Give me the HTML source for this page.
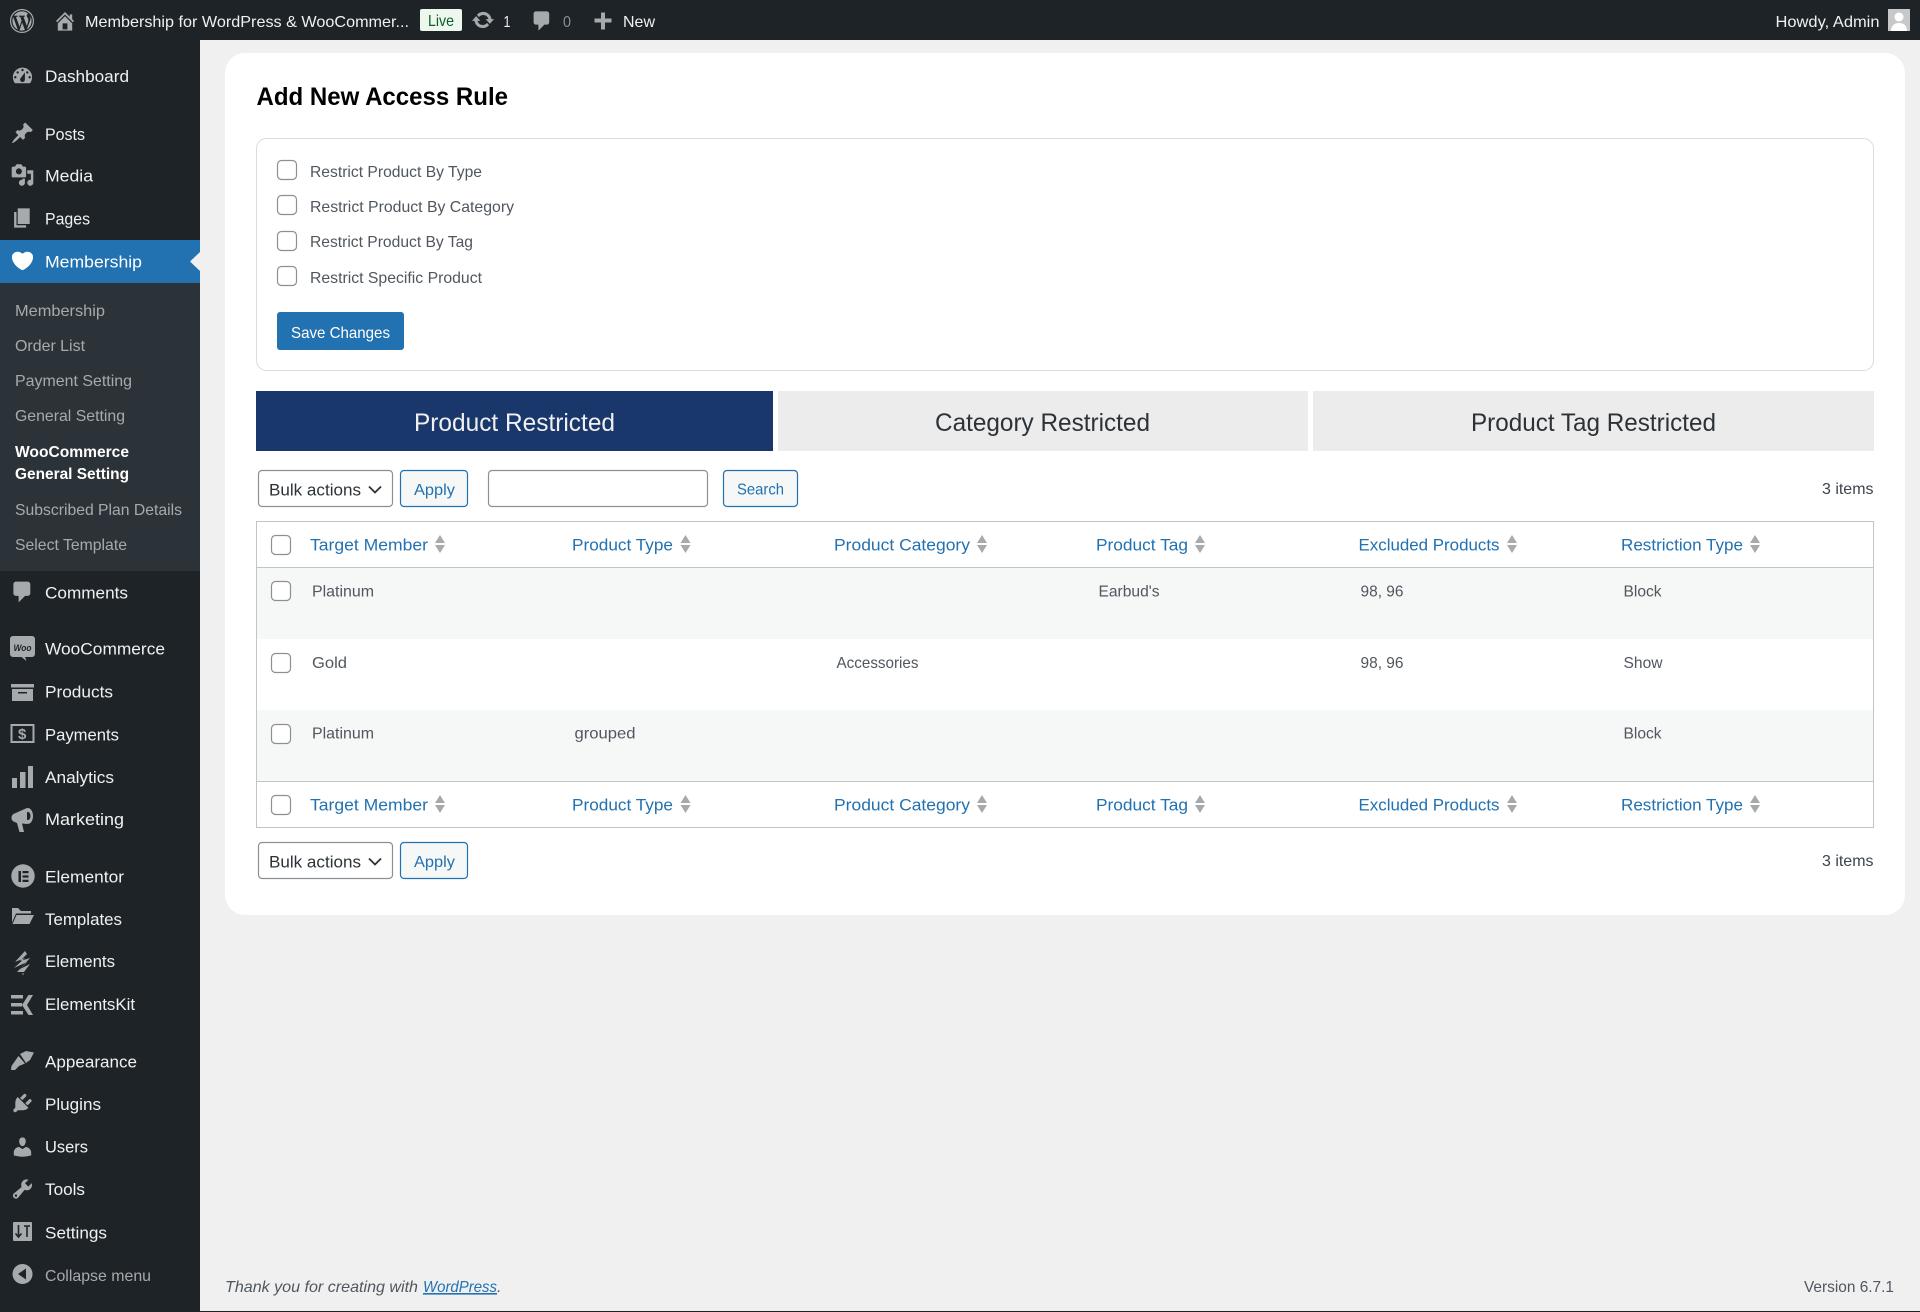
<!DOCTYPE html>
<html lang="en"><head><meta charset="utf-8"><title>Add New Access Rule</title>
<style>
html,body{margin:0;padding:0;background:#f0f0f1;width:1920px;height:1312px;overflow:hidden}
svg{display:block;position:absolute;left:0;top:0}
text{font-family:"Liberation Sans",sans-serif}
.t{font-size:16px;fill:#f0f0f1}
.m{font-size:17px;fill:#f0f0f1}
.s{font-size:16px;fill:#a7aaad}
.b{font-size:15.5px;fill:#fff;font-weight:bold}
.l{font-size:16px;fill:#50575e}
.h{font-size:17px;fill:#2271b1}
.tab{font-size:25px;fill:#2c3338}
.ic{fill:#a7aaad}
.cb{fill:#fff;stroke:#8c8f94;stroke-width:1.2}
.ar{fill:#a7aaad}
</style></head><body>
<svg width="1920" height="1312" viewBox="0 0 1920 1312" xmlns="http://www.w3.org/2000/svg">
<defs>
<g id="sort"><path d="M-5 8 L0 0 L5 8Z M-5 10 L5 10 L0 18Z" class="ar"/></g>
</defs>
<rect width="1920" height="1312" fill="#f0f0f1"/>
<rect x="0" y="0" width="1920" height="40" fill="#1d2327"/>
<rect x="0" y="40" width="200" height="1272" fill="#1d2327"/>
<rect x="0" y="283" width="200" height="288" fill="#2c3338"/>
<rect x="0" y="240" width="200" height="43" fill="#2271b1"/>
<path d="M200 252 L190 261.500 L200 271Z" fill="#f0f0f1"/>
<rect x="0" y="1311" width="1920" height="1" fill="#1d2327"/>

<!-- Admin bar -->
<g transform="translate(10,9) scale(1.2)" fill="#a7aaad"><path fill-rule="evenodd" d="M20 10c0-5.52-4.48-10-10-10S0 4.480 0 10s4.480 10 10 10 10-4.480 10-10zM10 1.010c4.970 0 8.990 4.020 8.990 8.990s-4.020 8.990-8.990 8.990S1.010 14.970 1.010 10 5.030 1.010 10 1.010zM8.010 14.820L4.960 6.610c.49-.03 1.050-.08 1.050-.08.43-.05.38-1.010-.06-.99 0 0-1.290.1-2.130.1-.15 0-.33 0-.52-.01 1.440-2.170 3.900-3.600 6.700-3.600 2.090 0 3.990.79 5.410 2.090-.6-.08-1.450.35-1.450 1.420 0 .66.38 1.220.79 1.880.31.54.5 1.220.5 2.210 0 1.340-1.270 4.480-1.270 4.480l-2.710-7.500c.48-.03.75-.16.75-.16.43-.05.38-1.100-.05-1.080 0 0-1.300.11-2.140.11-.78 0-2.110-.11-2.110-.11-.43-.02-.48 1.060-.05 1.080l.84.08 1.120 3.040zm6.020 2.150L16.640 10s.67-1.690.39-3.810c.63 1.140.94 2.420.94 3.810 0 2.960-1.560 5.580-3.940 6.970zM2.680 6.770L6.500 17.250c-2.670-1.300-4.470-4.080-4.470-7.250 0-1.160.2-2.230.65-3.230zm7.450 4.530l2.290 6.250c-.75.27-1.570.42-2.420.42-.72 0-1.410-.11-2.060-.3z"/></g>
<g transform="translate(53,9) scale(1.2)" fill="#a7aaad"><path fill-rule="evenodd" d="M16 8.500l1.530 1.530-1.060 1.060L10 4.620l-6.470 6.470-1.060-1.060L10 2.500l4 4v-2h2v4zm-6-2.460l6 5.990V18H4v-5.970zM12 17v-5H8v5h4z"/></g>
<text class="t" x="85" y="27" textLength="324" lengthAdjust="spacingAndGlyphs">Membership for WordPress &amp; WooCommer...</text>
<rect x="420" y="9" width="42" height="22" rx="2" fill="#edf7ee"/>
<text x="428" y="26" font-size="16" fill="#0a5c2a" textLength="26" lengthAdjust="spacingAndGlyphs">Live</text>
<g transform="translate(471,8) scale(1.2)" fill="#a7aaad"><path d="M10.200 3.280c3.530 0 6.430 2.610 6.920 6h2.080l-3.500 4-3.500-4h2.320c-.45-1.970-2.210-3.450-4.320-3.450-1.450 0-2.730.71-3.540 1.780L4.950 5.660C6.230 4.200 8.110 3.280 10.200 3.280zm-.4 13.440c-3.520 0-6.430-2.610-6.920-6H.8l3.500-4c1.170 1.330 2.330 2.670 3.500 4H5.480c.45 1.970 2.210 3.450 4.320 3.450 1.450 0 2.730-.71 3.540-1.780l1.710 1.950c-1.280 1.460-3.150 2.380-5.250 2.380z"/></g>
<text class="t" x="503.500" y="27" textLength="7" lengthAdjust="spacingAndGlyphs">1</text>
<g transform="translate(530,9) scale(1.2)" fill="#a7aaad"><path d="M5 2h9c1.100 0 2 .9 2 2v7c0 1.100-.9 2-2 2h-2l-5 5v-5H5c-1.100 0-2-.9-2-2V4c0-1.100.9-2 2-2z"/></g>
<text x="563" y="27" font-size="16" fill="#8c8f94" textLength="8" lengthAdjust="spacingAndGlyphs">0</text>
<rect x="594.500" y="18.500" width="17" height="4" fill="#a7aaad"/><rect x="601" y="12.500" width="4" height="17" fill="#a7aaad"/>
<text class="t" x="623" y="27" textLength="32" lengthAdjust="spacingAndGlyphs">New</text>
<text class="t" x="1775.500" y="27" textLength="104" lengthAdjust="spacingAndGlyphs">Howdy, Admin</text>
<rect x="1888" y="9" width="22" height="22" fill="#c8c8c8"/>
<circle cx="1899" cy="17" r="4.500" fill="#fff"/><path d="M1891 31c0-6 4-8 8-8s8 2 8 8z" fill="#fff"/>

<!-- Sidebar icons -->
<g transform="translate(10.500,64) scale(1.2)" class="ic"><path fill-rule="evenodd" d="M3.760 16h12.480c1.100-1.370 1.760-3.110 1.760-5 0-4.420-3.580-8-8-8s-8 3.580-8 8c0 1.890.66 3.630 1.760 5zM10 4c.55 0 1 .45 1 1s-.45 1-1 1-1-.45-1-1 .45-1 1-1zM6 6c.55 0 1 .45 1 1s-.45 1-1 1-1-.45-1-1 .45-1 1-1zm8 0c.55 0 1 .45 1 1s-.45 1-1 1-1-.45-1-1 .45-1 1-1zm-5.370 5.550L12 7v6c0 1.100-.9 2-2 2s-2-.9-2-2c0-.57.24-1.080.63-1.450zM4 10c.55 0 1 .45 1 1s-.45 1-1 1-1-.45-1-1 .45-1 1-1zm12 0c.55 0 1 .45 1 1s-.45 1-1 1-1-.45-1-1 .45-1 1-1z"/></g>
<g transform="translate(10.500,121) scale(1.2)" class="ic"><path d="M10.440 3.020l1.820-1.820 6.360 6.350-1.830 1.820c-1.050-.68-2.480-.57-3.410.36l-.75.75c-.92.93-1.040 2.350-.35 3.410l-1.830 1.820-2.410-2.410-2.800 2.790c-.42.42-3.380 2.710-3.800 2.290s1.860-3.390 2.280-3.810l2.790-2.790L4.100 9.360l1.830-1.820c1.050.69 2.480.57 3.400-.36l.75-.75c.93-.92 1.050-2.350.36-3.410z"/></g>
<g transform="translate(10.500,163) scale(1.2)" class="ic"><path fill-rule="evenodd" d="M13 11V4c0-.55-.45-1-1-1h-1.670L9 1H5L3.670 3H2c-.55 0-1 .45-1 1v7c0 .55.45 1 1 1h10c.55 0 1-.45 1-1zM7 4.500c1.380 0 2.500 1.120 2.500 2.500S8.380 9.500 7 9.500 4.500 8.380 4.500 7 5.620 4.500 7 4.500zM14 6h5v10.500c0 1.380-1.120 2.500-2.500 2.500S14 17.880 14 16.500s1.120-2.500 2.500-2.500c.17 0 .34.02.5.05V9h-3V6zm-4 8.050V13h2v3.500c0 1.380-1.120 2.500-2.500 2.500S7 17.880 7 16.500 8.120 14 9.500 14c.17 0 .34.02.5.05z"/></g>
<g transform="translate(10.500,206) scale(1.2)" class="ic"><path d="M6 15V2h10v13H6zm-1 1h8v2H3V5h2v11z"/></g>
<g transform="translate(9.500,248) scale(1.3)" fill="#fff"><path d="M10 17.120c3.330-1.400 5.740-3.790 7.040-6.210 1.280-2.410 1.460-4.810.32-6.250-1.030-1.290-2.370-1.780-3.730-1.740s-2.680.63-3.630 1.540c-.95-.91-2.270-1.500-3.630-1.540s-2.700.45-3.730 1.740c-1.140 1.440-.96 3.840.34 6.250 1.280 2.420 3.690 4.810 7.020 6.210z"/></g>
<g transform="translate(9.500,579) scale(1.3)" class="ic"><path d="M5 2h9c1.100 0 2 .9 2 2v7c0 1.100-.9 2-2 2h-2l-5 5v-5H5c-1.100 0-2-.9-2-2V4c0-1.100.9-2 2-2z"/></g>
<path class="ic" d="M13 636h19a3 3 0 0 1 3 3v15a3 3 0 0 1-3 3h-7l1.500 4-5-4H13a3 3 0 0 1-3-3v-15a3 3 0 0 1 3-3z"/>
<text x="13.500" y="651" font-size="9" font-style="italic" font-weight="bold" fill="#1d2327" textLength="18" lengthAdjust="spacingAndGlyphs">Woo</text>
<rect x="11" y="684" width="23" height="3.500" class="ic"/><path class="ic" fill-rule="evenodd" d="M12 689h21v12H12zM18 692h9v1.500h-9z"/>
<rect x="11.500" y="725" width="22" height="17" fill="none" stroke="#a7aaad" stroke-width="2"/>
<text x="18" y="739" font-size="15" font-weight="bold" fill="#a7aaad">$</text>
<rect x="12" y="778" width="5" height="10" class="ic"/><rect x="20" y="772" width="5.500" height="16" class="ic"/><rect x="28" y="766" width="5" height="22" class="ic"/>
<path class="ic" fill-rule="evenodd" d="M27 808 L14.500 813.500 a4.500 4.500 0 0 0 -1 8 L17 823 L19.500 832 H24 L22 823.500 L27 824 Z"/>
<path class="ic" fill-rule="evenodd" d="M28 808 a5 8 0 1 0 .01 0z M28 812 a2.500 4 0 1 1 -.01 0z"/>
<path class="ic" fill-rule="evenodd" d="M23 864.300 a11.700 11.700 0 1 0 .01 0z M18.500 871h2.500v11h-2.500z M22.500 871h6v2.200h-6z M22.500 875.400h6v2.200h-6z M22.500 879.800h6v2.200h-6z"/>
<path class="ic" d="M12 908h6l3 3h10v2.500H16l-4 9z M16.500 915H34l-4.500 9H12.500z"/>
<path class="ic" d="M25 951 L15 962 L25 958 L14 968 L27 962 L17 972 L24 972 L30 964 L20 969 L30 958 L20 961 L27 954z"/>
<circle cx="23" cy="974" r="0.800" class="ic"/>
<path class="ic" d="M11 995h12v3.500H11z M11 1003h11v3.500H11z M11 1011h12v3.500H11z M33 995 L27 1005 L33 1015 H28.500 L22 1005 L28.500 995z"/>
<path class="ic" d="M20 1054 L26 1051 L34 1052.500 L30 1060 L26 1063Z M18.500 1056 L25 1063.500 L19 1066 L15 1070 H11 L11.500 1066 L15 1061 Z"/>
<g transform="translate(10.500,1091) scale(1.2)" class="ic"><path d="M13.110 4.360L9.870 7.600 8 5.730l3.240-3.240c.35-.34 1.050-.2 1.560.32.52.51.66 1.210.31 1.550zm-8 1.770l.91-1.120 9.010 9.010-1.190.84c-.71.71-2.630 1.160-3.820 1.160H6.140L4.900 17.260c-.59.59-1.540.59-2.120 0-.59-.58-.59-1.530 0-2.120l1.240-1.240v-3.880c0-1.130.4-3.190 1.090-3.890zm7.260 3.970l3.240-3.240c.34-.35 1.040-.21 1.550.31.52.51.66 1.210.31 1.550l-3.240 3.250z"/></g>
<g transform="translate(10.500,1135) scale(1.2)" class="ic"><path d="M10 9.250c-2.270 0-2.730-3.440-2.730-3.440C7 4.020 7.820 2 9.970 2c2.160 0 2.980 2.020 2.710 3.810 0 0-.41 3.440-2.680 3.440zm0 2.570L12.720 10c2.390 0 4.520 2.330 4.520 4.530v2.490s-3.650 1.130-7.240 1.130c-3.650 0-7.240-1.130-7.240-1.130v-2.490c0-2.250 1.940-4.480 4.470-4.480z"/></g>
<g transform="translate(10.500,1177) scale(1.2)" class="ic"><path fill-rule="evenodd" d="M16.680 9.770c-1.340 1.340-3.300 1.670-4.950.99l-5.410 6.520c-.99.99-2.590.99-3.580 0s-.99-2.590 0-3.570l6.520-5.420c-.68-1.650-.35-3.610.99-4.950 1.280-1.280 3.120-1.620 4.720-1.060l-2.890 2.890 2.820 2.820 2.860-2.870c.53 1.580.18 3.390-1.080 4.650zM3.810 16.210c.4.39 1.040.39 1.430 0 .4-.4.4-1.040 0-1.430-.39-.4-1.030-.4-1.430 0-.39.39-.39 1.030 0 1.430z"/></g>
<rect x="13" y="1222" width="19" height="19" rx="1" class="ic"/>
<path d="M18.500 1225v11 M15.500 1233.500l3 3.500 3-3.500 M24 1226h6 M27 1226v11" stroke="#1d2327" stroke-width="1.600" fill="none"/>
<path class="ic" fill-rule="evenodd" d="M22.500 1264 a10 10 0 1 0 .01 0z M26 1268.500v11l-8-5.500z"/>

<!-- Sidebar text -->
<text class="m" x="45" y="82" textLength="84" lengthAdjust="spacingAndGlyphs">Dashboard</text>
<text class="m" x="45" y="140" textLength="40" lengthAdjust="spacingAndGlyphs">Posts</text>
<text class="m" x="45" y="181.500" textLength="48" lengthAdjust="spacingAndGlyphs">Media</text>
<text class="m" x="45" y="224.500" textLength="45" lengthAdjust="spacingAndGlyphs">Pages</text>
<text class="m" x="45" y="267.500" style="fill:#fff" textLength="97" lengthAdjust="spacingAndGlyphs">Membership</text>
<text class="s" x="15" y="316" textLength="90" lengthAdjust="spacingAndGlyphs">Membership</text>
<text class="s" x="15" y="351" textLength="70" lengthAdjust="spacingAndGlyphs">Order List</text>
<text class="s" x="15" y="386" textLength="117" lengthAdjust="spacingAndGlyphs">Payment Setting</text>
<text class="s" x="15" y="421" textLength="110" lengthAdjust="spacingAndGlyphs">General Setting</text>
<text class="b" x="15" y="457" textLength="114" lengthAdjust="spacingAndGlyphs">WooCommerce</text>
<text class="b" x="15" y="479" textLength="114" lengthAdjust="spacingAndGlyphs">General Setting</text>
<text class="s" x="15" y="515" textLength="167" lengthAdjust="spacingAndGlyphs">Subscribed Plan Details</text>
<text class="s" x="15" y="550" textLength="112" lengthAdjust="spacingAndGlyphs">Select Template</text>
<text class="m" x="45" y="598.500" textLength="83" lengthAdjust="spacingAndGlyphs">Comments</text>
<text class="m" x="45" y="654.500" textLength="120" lengthAdjust="spacingAndGlyphs">WooCommerce</text>
<text class="m" x="45" y="697.500" textLength="68" lengthAdjust="spacingAndGlyphs">Products</text>
<text class="m" x="45" y="740.500" textLength="74" lengthAdjust="spacingAndGlyphs">Payments</text>
<text class="m" x="45" y="783" textLength="69" lengthAdjust="spacingAndGlyphs">Analytics</text>
<text class="m" x="45" y="825" textLength="79" lengthAdjust="spacingAndGlyphs">Marketing</text>
<text class="m" x="45" y="882.500" textLength="79" lengthAdjust="spacingAndGlyphs">Elementor</text>
<text class="m" x="45" y="925" textLength="77" lengthAdjust="spacingAndGlyphs">Templates</text>
<text class="m" x="45" y="967" textLength="70" lengthAdjust="spacingAndGlyphs">Elements</text>
<text class="m" x="45" y="1010" textLength="90" lengthAdjust="spacingAndGlyphs">ElementsKit</text>
<text class="m" x="45" y="1067.500" textLength="92" lengthAdjust="spacingAndGlyphs">Appearance</text>
<text class="m" x="45" y="1110" textLength="56" lengthAdjust="spacingAndGlyphs">Plugins</text>
<text class="m" x="45" y="1152.500" textLength="43" lengthAdjust="spacingAndGlyphs">Users</text>
<text class="m" x="45" y="1195" textLength="40" lengthAdjust="spacingAndGlyphs">Tools</text>
<text class="m" x="45" y="1238.500" textLength="62" lengthAdjust="spacingAndGlyphs">Settings</text>
<text x="45" y="1281" font-size="16" fill="#a7aaad" textLength="106" lengthAdjust="spacingAndGlyphs">Collapse menu</text>

<!-- Card -->
<rect x="225" y="53" width="1680" height="862" rx="20" fill="#fff"/>
<text x="256.500" y="105" font-size="25" font-weight="bold" fill="#000" textLength="251.500" lengthAdjust="spacingAndGlyphs">Add New Access Rule</text>
<rect x="256.500" y="138.500" width="1617" height="232" rx="10" fill="#fff" stroke="#dcdcde"/>
<rect class="cb" x="277.500" y="160.500" width="19" height="19" rx="4"/>
<rect class="cb" x="277.500" y="195.500" width="19" height="19" rx="4"/>
<rect class="cb" x="277.500" y="231.500" width="19" height="19" rx="4"/>
<rect class="cb" x="277.500" y="266.500" width="19" height="19" rx="4"/>
<text class="l" x="310" y="177" textLength="172" lengthAdjust="spacingAndGlyphs">Restrict Product By Type</text>
<text class="l" x="310" y="212" textLength="204" lengthAdjust="spacingAndGlyphs">Restrict Product By Category</text>
<text class="l" x="310" y="247" textLength="163" lengthAdjust="spacingAndGlyphs">Restrict Product By Tag</text>
<text class="l" x="310" y="283" textLength="172" lengthAdjust="spacingAndGlyphs">Restrict Specific Product</text>
<rect x="277" y="312" width="127" height="38" rx="3" fill="#2271b1"/>
<text x="291" y="338" font-size="16" fill="#fff" textLength="99" lengthAdjust="spacingAndGlyphs">Save Changes</text>

<!-- Tabs -->
<rect x="256" y="391" width="517" height="60" fill="#1a376c"/>
<rect x="778" y="391" width="530" height="60" fill="#ececec"/>
<rect x="1313" y="391" width="561" height="60" fill="#ececec"/>
<text class="tab" style="fill:#f0f0f1" x="414" y="431" textLength="201" lengthAdjust="spacingAndGlyphs">Product Restricted</text>
<text class="tab" x="935" y="431" textLength="215" lengthAdjust="spacingAndGlyphs">Category Restricted</text>
<text class="tab" x="1471" y="431" textLength="245" lengthAdjust="spacingAndGlyphs">Product Tag Restricted</text>

<!-- Top toolbar -->
<rect x="258.500" y="470.500" width="134" height="36" rx="3.500" fill="#fff" stroke="#8c8f94" stroke-width="1.200"/>
<text x="269" y="495.500" font-size="17" fill="#2c3338" textLength="92" lengthAdjust="spacingAndGlyphs">Bulk actions</text>
<path d="M369 486.500l6 6 6-6" fill="none" stroke="#2c3338" stroke-width="1.800"/>
<rect x="400.500" y="470.500" width="67" height="36" rx="3.500" fill="#f6f7f7" stroke="#2271b1" stroke-width="1.200"/>
<text x="414" y="495" font-size="16" fill="#2271b1" textLength="41" lengthAdjust="spacingAndGlyphs">Apply</text>
<rect x="488.500" y="470.500" width="219" height="36" rx="3.500" fill="#fff" stroke="#8c8f94" stroke-width="1.200"/>
<rect x="723.500" y="470.500" width="74" height="36" rx="3.500" fill="#f6f7f7" stroke="#2271b1" stroke-width="1.200"/>
<text x="737" y="494.500" font-size="16" fill="#2271b1" textLength="47" lengthAdjust="spacingAndGlyphs">Search</text>
<text x="1822" y="494" font-size="16" fill="#3c434a" textLength="51.500" lengthAdjust="spacingAndGlyphs">3 items</text>

<!-- Table -->
<rect x="256.500" y="521.500" width="1617" height="306" fill="#fff" stroke="#c3c4c7" stroke-width="1"/>
<rect x="257" y="568" width="1616" height="71" fill="#f6f7f7"/>
<rect x="257" y="710" width="1616" height="71" fill="#f6f7f7"/>
<line x1="257" x2="1873" y1="567.500" y2="567.500" stroke="#c3c4c7" stroke-width="1"/>
<line x1="257" x2="1873" y1="781.500" y2="781.500" stroke="#c3c4c7" stroke-width="1"/>
<rect class="cb" x="271.500" y="535.500" width="19" height="19" rx="4"/>
<rect class="cb" x="271.500" y="581.500" width="19" height="19" rx="4"/>
<rect class="cb" x="271.500" y="653.500" width="19" height="19" rx="4"/>
<rect class="cb" x="271.500" y="724.500" width="19" height="19" rx="4"/>
<rect class="cb" x="271.500" y="795.500" width="19" height="19" rx="4"/>

<text class="h" x="310" y="550.500" textLength="118" lengthAdjust="spacingAndGlyphs">Target Member</text>
<text class="h" x="572" y="550.500" textLength="101" lengthAdjust="spacingAndGlyphs">Product Type</text>
<text class="h" x="834" y="550.500" textLength="136" lengthAdjust="spacingAndGlyphs">Product Category</text>
<text class="h" x="1096" y="550.500" textLength="92" lengthAdjust="spacingAndGlyphs">Product Tag</text>
<text class="h" x="1358.500" y="550.500" textLength="141" lengthAdjust="spacingAndGlyphs">Excluded Products</text>
<text class="h" x="1621" y="550.500" textLength="122" lengthAdjust="spacingAndGlyphs">Restriction Type</text>
<use href="#sort" x="440" y="535"/><use href="#sort" x="685.500" y="535"/><use href="#sort" x="982" y="535"/><use href="#sort" x="1200" y="535"/><use href="#sort" x="1512" y="535"/><use href="#sort" x="1755" y="535"/>

<text class="l" x="312" y="596.500" textLength="62" lengthAdjust="spacingAndGlyphs">Platinum</text>
<text class="l" x="1098.500" y="596.500" textLength="61" lengthAdjust="spacingAndGlyphs">Earbud's</text>
<text class="l" x="1360.500" y="596.500" textLength="43" lengthAdjust="spacingAndGlyphs">98, 96</text>
<text class="l" x="1623.500" y="596.500" textLength="38" lengthAdjust="spacingAndGlyphs">Block</text>
<text class="l" x="312" y="668" textLength="35" lengthAdjust="spacingAndGlyphs">Gold</text>
<text class="l" x="836.500" y="668" textLength="82" lengthAdjust="spacingAndGlyphs">Accessories</text>
<text class="l" x="1360.500" y="668" textLength="43" lengthAdjust="spacingAndGlyphs">98, 96</text>
<text class="l" x="1623.500" y="668" textLength="39" lengthAdjust="spacingAndGlyphs">Show</text>
<text class="l" x="312" y="738.500" textLength="62" lengthAdjust="spacingAndGlyphs">Platinum</text>
<text class="l" x="574.500" y="738.500" textLength="61" lengthAdjust="spacingAndGlyphs">grouped</text>
<text class="l" x="1623.500" y="738.500" textLength="38" lengthAdjust="spacingAndGlyphs">Block</text>

<text class="h" x="310" y="810.500" textLength="118" lengthAdjust="spacingAndGlyphs">Target Member</text>
<text class="h" x="572" y="810.500" textLength="101" lengthAdjust="spacingAndGlyphs">Product Type</text>
<text class="h" x="834" y="810.500" textLength="136" lengthAdjust="spacingAndGlyphs">Product Category</text>
<text class="h" x="1096" y="810.500" textLength="92" lengthAdjust="spacingAndGlyphs">Product Tag</text>
<text class="h" x="1358.500" y="810.500" textLength="141" lengthAdjust="spacingAndGlyphs">Excluded Products</text>
<text class="h" x="1621" y="810.500" textLength="122" lengthAdjust="spacingAndGlyphs">Restriction Type</text>
<use href="#sort" x="440" y="795"/><use href="#sort" x="685.500" y="795"/><use href="#sort" x="982" y="795"/><use href="#sort" x="1200" y="795"/><use href="#sort" x="1512" y="795"/><use href="#sort" x="1755" y="795"/>

<!-- Bottom toolbar -->
<rect x="258.500" y="842.500" width="134" height="36" rx="3.500" fill="#fff" stroke="#8c8f94" stroke-width="1.200"/>
<text x="269" y="867.500" font-size="17" fill="#2c3338" textLength="92" lengthAdjust="spacingAndGlyphs">Bulk actions</text>
<path d="M369 858.500l6 6 6-6" fill="none" stroke="#2c3338" stroke-width="1.800"/>
<rect x="400.500" y="842.500" width="67" height="36" rx="3.500" fill="#f6f7f7" stroke="#2271b1" stroke-width="1.200"/>
<text x="414" y="867" font-size="16" fill="#2271b1" textLength="41" lengthAdjust="spacingAndGlyphs">Apply</text>
<text x="1822" y="866" font-size="16" fill="#3c434a" textLength="51.500" lengthAdjust="spacingAndGlyphs">3 items</text>

<!-- Footer -->
<text x="225" y="1292" font-size="16" font-style="italic" fill="#50575e" textLength="193" lengthAdjust="spacingAndGlyphs">Thank you for creating with</text>
<text x="423" y="1292" font-size="16" font-style="italic" fill="#2271b1" textLength="74" lengthAdjust="spacingAndGlyphs" text-decoration="underline">WordPress</text>
<text x="497" y="1292" font-size="16" font-style="italic" fill="#50575e">.</text>
<text x="1804" y="1292" font-size="16" fill="#50575e" textLength="90" lengthAdjust="spacingAndGlyphs">Version 6.7.1</text>
</svg>
</body></html>
